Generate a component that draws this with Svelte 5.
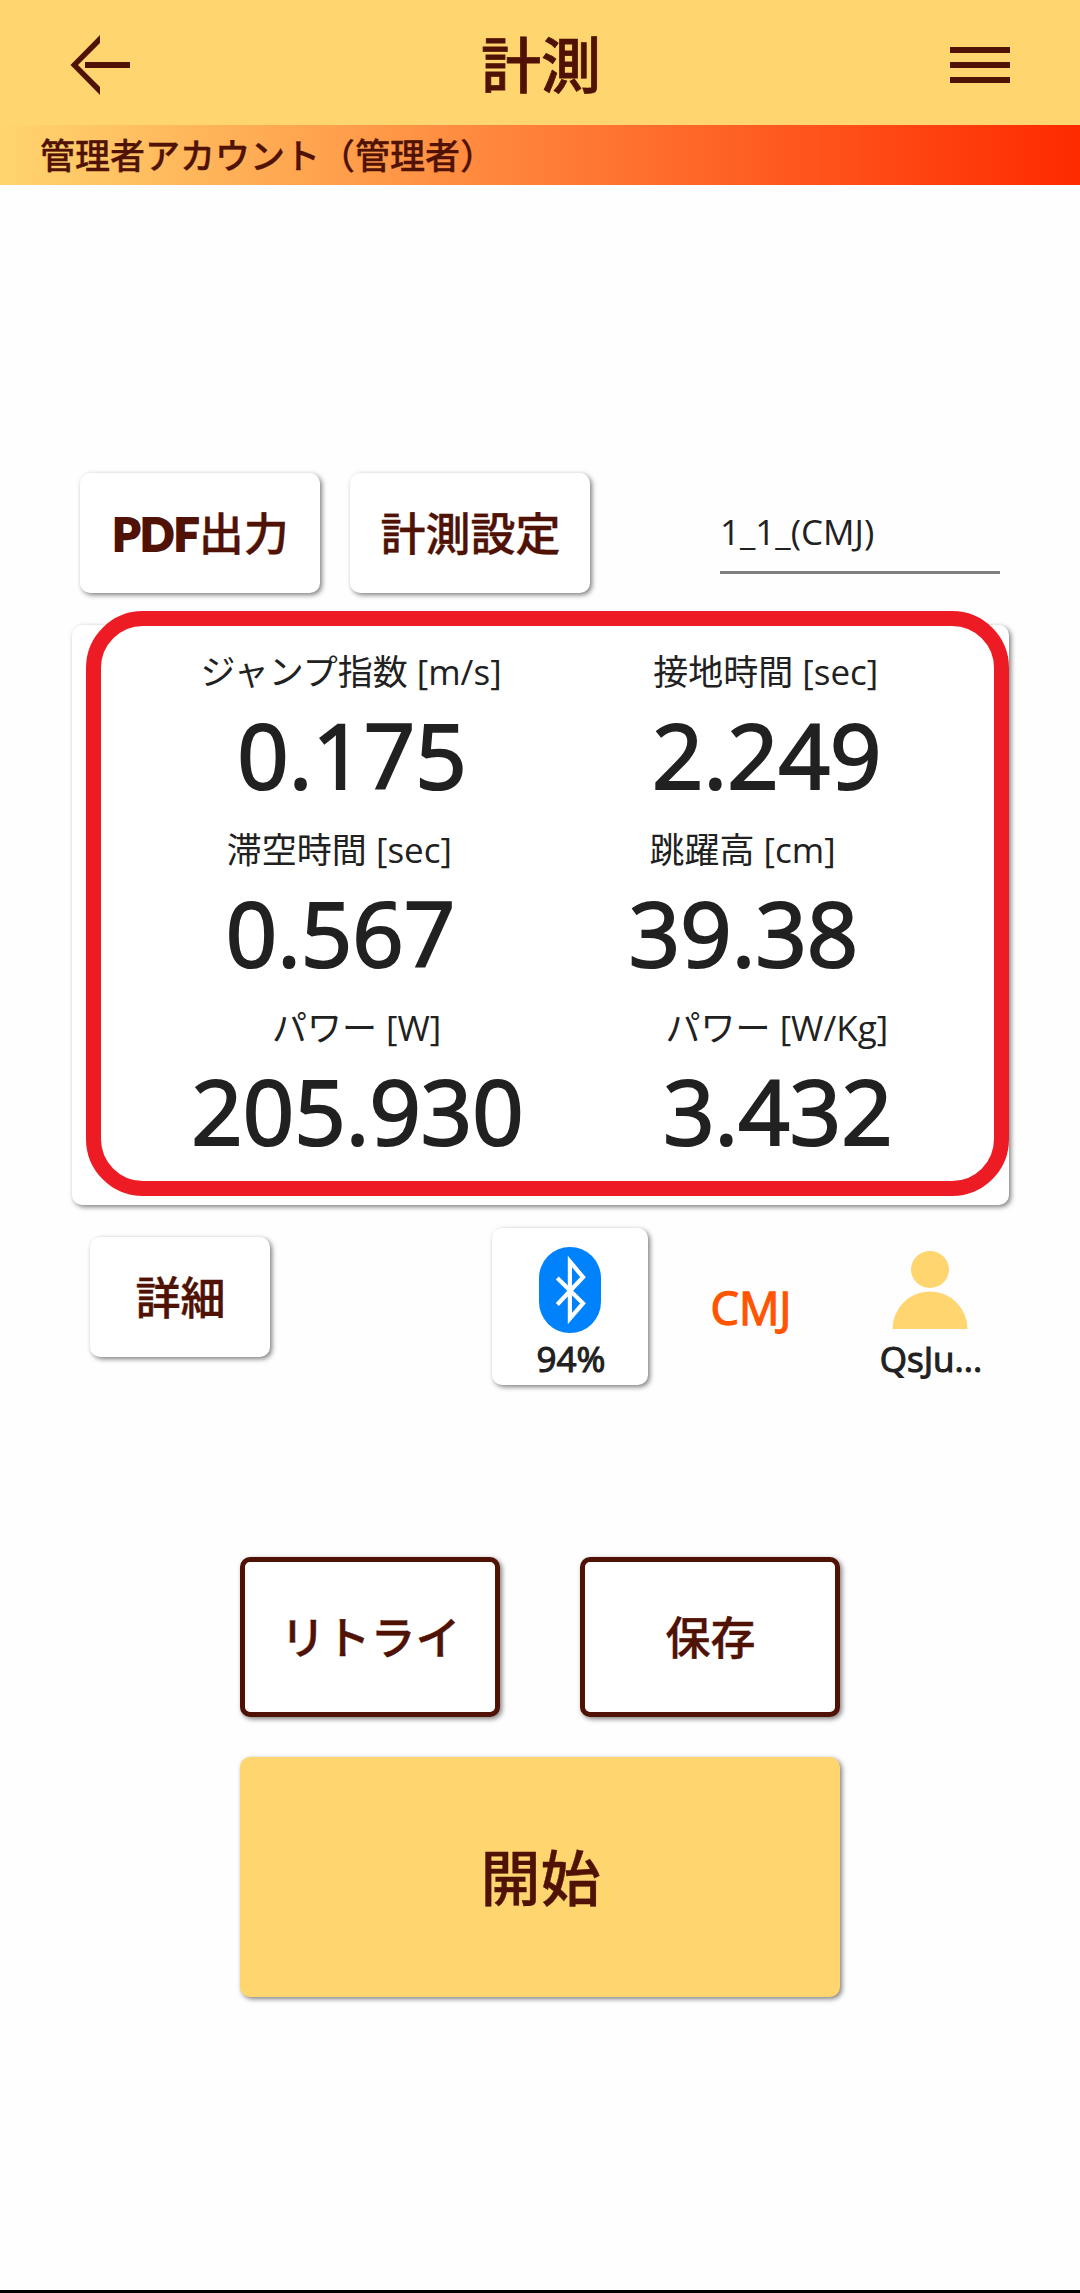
<script lang="ts">
  type Metric = {label: string; value: string};

  const account = '管理者アカウント（管理者）';
  const battery = 94;
  const jumpType = 'CMJ';
  const userName = 'QsJu...';

  const rows: Metric[][] = [
    [
      {label: 'ジャンプ指数 [m/s]', value: '0.175'},
      {label: '接地時間 [sec]', value: '2.249'}
    ],
    [
      {label: '滞空時間 [sec]', value: '0.567'},
      {label: '跳躍高 [cm]', value: '39.38'}
    ],
    [
      {label: 'パワー [W]', value: '205.930'},
      {label: 'パワー [W/Kg]', value: '3.432'}
    ]
  ];

  let fileName = $state('1_1_(CMJ)');
</script>

<main>
  <header>
    <button class="icon-button" aria-label="戻る">
      <svg width="60" height="60" viewBox="0 0 60 60">
        <path d="M30 0 L0.5 30 L30 60 V52 L8 30 L30 8 Z" />
        <rect x="15" y="27" width="45" height="6" />
      </svg>
    </button>
    <h1>計測</h1>
    <button class="icon-button" aria-label="メニュー">
      <svg width="60" height="60" viewBox="0 0 60 60">
        <rect y="12" width="60" height="6" />
        <rect y="27" width="60" height="6" />
        <rect y="42" width="60" height="6" />
      </svg>
    </button>
  </header>
  <div class="account">{account}</div>

  <div class="toolbar">
    <button class="card"><span class="latin">PDF</span>出力</button>
    <button class="card">計測設定</button>
    <input type="text" aria-label="ファイル名" bind:value={fileName} />
  </div>

  <section class="metrics">
    {#each rows as row}
      <div class="row">
        {#each row as metric}
          <div class="metric">
            <div class="label">{metric.label}</div>
            <div class="value">{metric.value}</div>
          </div>
        {/each}
      </div>
    {/each}
    <div class="highlight"></div>
  </section>

  <div class="status">
    <button class="card detail">詳細</button>
    <div class="card bluetooth">
      <svg width="62" height="86" viewBox="0 0 62 86">
        <rect width="62" height="86" rx="31" ry="31" fill="#0082fc" />
        <path
          d="M18.3 31 L44 56.3 L30.9 71.5 V14.5 L44 30.2 L18.3 57.5"
          fill="none"
          stroke="white"
          stroke-width="4.2"
        />
      </svg>
      <div class="caption">{battery}%</div>
    </div>
    <div class="jump-type">{jumpType}</div>
    <div class="user">
      <svg width="76" height="78" viewBox="0 0 76 78">
        <ellipse cx="38" cy="18.5" rx="19" ry="18.5" />
        <path d="M0.5 78 A37.5 37.5 0 0 1 75.5 78 Z" />
      </svg>
      <div class="caption">{userName}</div>
    </div>
  </div>

  <div class="actions">
    <button class="card outlined">リトライ</button>
    <button class="card outlined">保存</button>
    <button class="card start">開始</button>
  </div>

  <footer></footer>
</main>

<style>
  :global(body) {
    background-color: #fefefe;
  }

  main {
    --brown: #4f1205;
    --yellow: #ffd56f;
    --text: #212121;

    display: flex;
    flex-direction: column;
    box-sizing: border-box;
    width: 1080px;
    height: 2293px;

    background-color: #fefefe;
    color: var(--text);
    font-family: 'Open Sans', 'Noto Sans CJK JP', sans-serif;
  }

  header {
    display: flex;
    justify-content: space-between;
    align-items: center;
    box-sizing: border-box;
    height: 125px;
    padding: 5px 70px 0;

    background-color: var(--yellow);
    color: var(--brown);
  }

  h1 {
    margin: 0;
    padding-left: 2px;
    font-size: 60px;
    font-weight: 500;
    line-height: 120px;
    -webkit-text-stroke: 0.8px var(--brown);
  }

  button {
    padding: 0;
    border: none;
    color: var(--brown);
    font-family: inherit;
  }

  .icon-button {
    background: none;
    height: 60px;
    width: 60px;
  }

  .icon-button svg {
    display: block;
    fill: var(--brown);
  }

  .account {
    height: 60px;
    padding-left: 40px;

    background: linear-gradient(to right, var(--yellow), #ff2a00);
    color: var(--brown);
    font-size: 35px;
    font-weight: 500;
    line-height: 61px;
    -webkit-text-stroke: 0.3px var(--brown);
  }

  .card {
    box-sizing: border-box;
    border-radius: 10px;
    background-color: white;
    box-shadow: 2px 2px 5px rgba(0, 0, 0, 0.5);
    font-size: 45px;
    font-weight: 500;
  }

  button.card {
    padding: 0 0 4px 1px;
    -webkit-text-stroke: 0.4px var(--brown);
  }

  .latin {
    font-family: Lato, sans-serif;
    font-weight: 900;
    letter-spacing: -0.5px;
    -webkit-text-stroke: 1.8px var(--brown);
  }

  .toolbar {
    display: flex;
    gap: 30px;
    margin: 288px 80px 0;
  }

  .toolbar .card {
    height: 120px;
    width: 240px;
  }

  input {
    box-sizing: border-box;
    height: 101px;
    width: 280px;
    margin-left: 100px;
    padding: 18px 0 0;

    background: none;
    border: none;
    border-bottom: 3px solid #808080;
    color: var(--text);
    font-family: inherit;
    font-size: 35px;
  }

  .metrics {
    box-sizing: border-box;
    height: 580px;
    width: 937px;
    margin: 32px 0 0 72px;
    padding-top: 19px;
    position: relative;

    background-color: white;
    border-radius: 10px;
    box-shadow: 2px 2px 5px rgba(0, 0, 0, 0.5);
  }

  .row {
    display: flex;
    justify-content: space-evenly;
    gap: 21px;
    height: 178px;
    padding-left: 1px;
  }

  .metric {
    text-align: center;
  }

  .label {
    font-size: 35px;
    line-height: 56px;
  }

  .value {
    padding-left: 2px;
    font-size: 90px;
    line-height: 108px;
    -webkit-text-stroke: 2.2px var(--text);
  }

  /* red frame that draws attention to the results */
  .highlight {
    border: 15px solid #ed1c24;
    border-radius: 57px;
    inset: -14px 0 9px 14px;
    pointer-events: none;
    position: absolute;
  }

  .status {
    display: flex;
    margin: 23px 0 0 90px;
  }

  .detail {
    height: 120px;
    width: 180px;
    margin-top: 9px;
  }

  .bluetooth {
    display: flex;
    flex-direction: column;
    align-items: center;
    height: 157px;
    width: 156px;
    margin-left: 222px;
    padding-top: 19px;
  }

  .caption {
    padding-left: 2px;
    font-size: 35px;
    line-height: 52px;
    -webkit-text-stroke: 1.1px var(--text);
  }

  .jump-type {
    box-sizing: border-box;
    width: 204px;
    padding-left: 2px;
    color: #ff5500;
    font-size: 45px;
    line-height: 160px;
    text-align: center;
    -webkit-text-stroke: 1.3px #ff5500;
  }

  .user {
    display: flex;
    flex-direction: column;
    align-items: center;
    width: 156px;
    padding-top: 23px;
  }

  .user svg {
    fill: var(--yellow);
    margin-bottom: 4px;
  }

  .actions {
    display: flex;
    flex-wrap: wrap;
    gap: 40px 80px;
    width: 600px;
    margin: 169px auto 0;
  }

  .outlined {
    height: 160px;
    width: 260px;
    border: 5px solid var(--brown);
  }

  .start {
    height: 240px;
    width: 600px;
    background-color: var(--yellow);
    font-size: 60px;
  }

  footer {
    height: 3px;
    margin-top: auto;
    background-color: black;
  }
</style>
